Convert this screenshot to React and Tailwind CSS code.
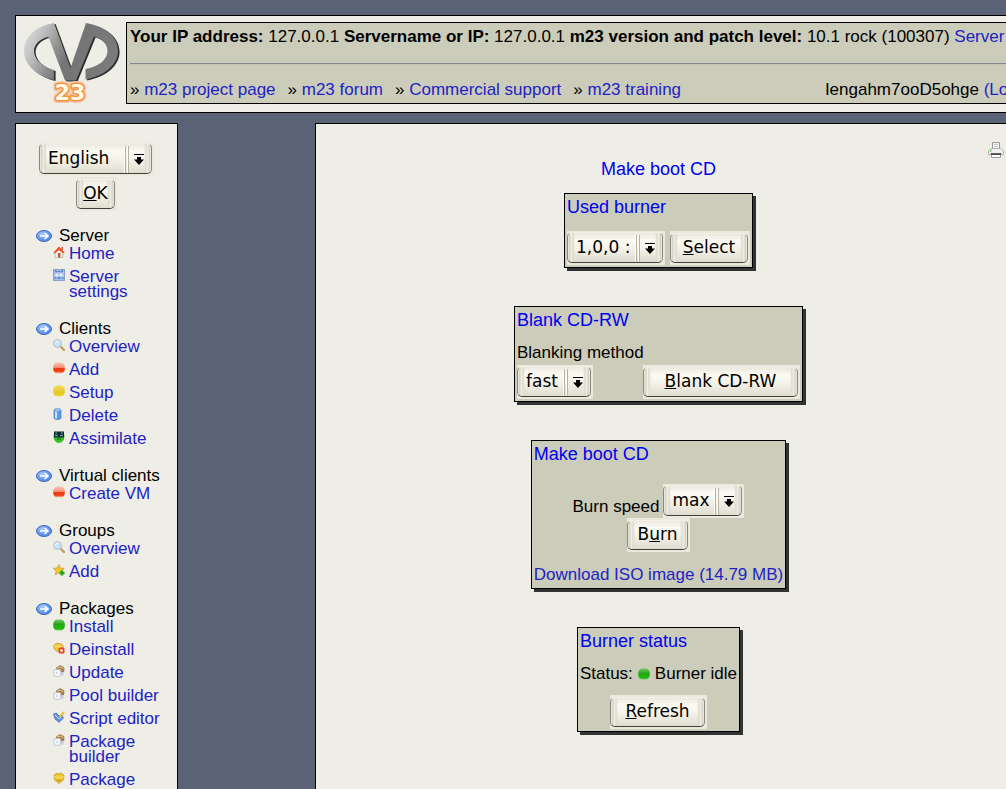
import React from "react";

const linkClass = "text-[#2222c4]";

function Logo() {
  const shape =
    "M30 1C11 4 0 16 0 29.5C0 43 13 54 30 58V48C19 45 10 38 10 29C10 22 17 16 24.5 15L41 58.5H52L70 14.5C78 17 83.5 22 83.5 29C83.5 38 74 45 61.5 47V57.5C80 54 94 43 94 29C94 14 80 4 62 1L46.5 46Z";
  return (
    <svg width="96" height="82" viewBox="0 0 96 82" role="img" aria-label="m23 logo" className="block shrink-0">
      <defs>
        <linearGradient id="metal" x1="0" y1="0.1" x2="1" y2="0.4">
          <stop offset="0" stopColor="#e0e0e0" />
          <stop offset="0.2" stopColor="#c0c0c0" />
          <stop offset="0.42" stopColor="#8e8e8e" />
          <stop offset="0.55" stopColor="#747474" />
          <stop offset="1" stopColor="#7a7a7a" />
        </linearGradient>
      </defs>
      <path d={shape} fill="#2c2c2c" transform="translate(1.6 1)" />
      <path d={shape} fill="url(#metal)" />
      <g fontFamily="DejaVu Sans" fontWeight="bold" fontSize="22" textAnchor="middle" strokeLinejoin="round">
        <text x="46" y="78" fill="none" stroke="#f8c4ae" strokeWidth="6">23</text>
        <text x="46" y="78" fill="none" stroke="#f0953c" strokeWidth="3">23</text>
        <text x="46" y="78" fill="#fffbe6">23</text>
      </g>
    </svg>
  );
}

function SectionIcon() {
  return (
    <svg width="16" height="12" viewBox="0 0 16 12" aria-hidden="true" className="block shrink-0">
      <defs>
        <radialGradient id="blueOval" cx="0.4" cy="0.35">
          <stop offset="0" stopColor="#a8ccff" />
          <stop offset="1" stopColor="#5a92ee" />
        </radialGradient>
      </defs>
      <ellipse cx="8" cy="6" rx="7.5" ry="5.5" fill="url(#blueOval)" stroke="#4468b8" />
      <path d="M4 6H11.5M8.5 3L12 6L8.5 9" stroke="#fff" strokeWidth="1.6" fill="none" />
    </svg>
  );
}

function Ball({ id, top, mid, bottom }) {
  return (
    <>
      <defs>
        <linearGradient id={id} x1="0" y1="0" x2="0" y2="1">
          <stop offset="0" stopColor={top} />
          <stop offset="0.45" stopColor={mid} />
          <stop offset="0.5" stopColor={bottom} />
          <stop offset="0.8" stopColor={bottom} />
          <stop offset="1" stopColor={top} />
        </linearGradient>
      </defs>
      <rect x="0.2" y="0.5" width="11.6" height="11" rx="4.5" fill={`url(#${id})`} />
    </>
  );
}

const glyphs = {
  home: (
    <>
      <path d="M2 6V11.5H10V6L6 2Z" fill="#eee9e2" stroke="#aaa398" strokeWidth="0.6" />
      <path d="M0.3 6.8L6 0.6L11.7 6.8L10 7.2L6 4L2 7.2Z" fill="#ee4f1e" />
      <rect x="8.5" y="1" width="1.5" height="3" fill="#b55b33" />
      <rect x="5" y="7" width="2.4" height="4.5" fill="#a5643b" />
    </>
  ),
  settings: (
    <>
      <rect x="0.5" y="0.5" width="11" height="11" fill="#a5c0ec" stroke="#8c9fc4" />
      <path d="M1.5 6L4 4L6 6L8 4L10.5 6L8 8L6 6L4 8Z" fill="#dfeaff" />
      <path d="M2 1.5L4 3M10 1.5L8 3M5 2.5H7M1.5 9.5L3.5 8.5M5 9.5L6 8.5L7 9.5M10.5 9.5L8.5 8.5" stroke="#4a73bd" strokeWidth="1.2" fill="none" />
    </>
  ),
  search: (
    <>
      <path d="M7.5 7.5L11 11" stroke="#c09a5c" strokeWidth="2.2" strokeLinecap="round" />
      <circle cx="4.5" cy="4.5" r="3.9" fill="#c9e6f4" stroke="#b0bfc8" />
      <path d="M2.5 4A2.5 2.5 0 0 1 5 2" stroke="#fff" fill="none" />
    </>
  ),
  red: <Ball id="ballRed" top="#f9c4b6" mid="#f6907a" bottom="#f03c12" />,
  green: <Ball id="ballGreen" top="#6ccc5e" mid="#2ca020" bottom="#1eb20c" />,
  yellow: <Ball id="ballYellow" top="#f0dc58" mid="#e8cf3e" bottom="#e6ca28" />,
  bin: (
    <>
      <path d="M1 2V10C1 12 8 12 8 10V2Z" fill="#5b9be8" stroke="#3b6fb5" strokeWidth="0.6" />
      <path d="M2 3V10.5H4V3Z" fill="#cde4ff" />
      <ellipse cx="4.5" cy="2" rx="3.5" ry="1.4" fill="#9ec8f5" stroke="#5a84bb" strokeWidth="0.6" />
    </>
  ),
  assimilate: (
    <>
      <path d="M0.3 4H11.7L10.8 9L8 11.8H4L1.2 9Z" fill="#36c224" />
      <rect x="1" y="0.5" width="10" height="6" fill="#17262b" />
      <path d="M2 4.5H5M7 4.5H10M2.5 2H4M8 2H9.5" stroke="#4f9fb0" strokeWidth="1.3" />
      <path d="M4 8H8" stroke="#1b6f14" />
    </>
  ),
  star: (
    <>
      <path d="M5.8 0.5L7.3 4L11.3 4.4L8.3 7L9.2 11L5.8 8.8L2.3 11L3.2 7L0.3 4.4L4.2 4Z" fill="#f2c62e" stroke="#c0922a" strokeWidth="0.6" />
      <path d="M9 6.5V11.5M6.5 9H11.5" stroke="#22a51a" strokeWidth="2.4" />
    </>
  ),
  pack: (
    <>
      <path d="M1 3L4 1L6 2L8 1L11 3L10.5 8L6 11.5L1.5 8Z" fill="#efc52f" stroke="#b88d28" strokeWidth="0.6" />
      <path d="M1.5 4.5L6 6L10.5 4.5" stroke="#fae788" fill="none" />
      <path d="M4 8L6 9L8 8" stroke="#a77f20" fill="none" />
    </>
  ),
  packRemove: (
    <>
      <path d="M0.5 4L3 1L6 1.5L9 2L10.5 5L8 9L4 9.5L1 7Z" fill="#f0c63a" stroke="#c09530" strokeWidth="0.6" />
      <path d="M2 4L6 5L9 4" stroke="#fbeba0" fill="none" />
      <rect x="5.5" y="5.5" width="6" height="6" rx="1.5" fill="#ea4025" />
      <rect x="7.3" y="7.3" width="2.4" height="2.4" fill="#fff" />
    </>
  ),
  update: (
    <>
      <path d="M3 3L7 0.5L11 2.5V6.5L7 7Z" fill="#b08250" stroke="#7d5c38" strokeWidth="0.5" />
      <path d="M4 3L7 2L10.5 3.5" stroke="#e5c48f" fill="none" />
      <rect x="1" y="4.5" width="6.5" height="6.8" rx="1" fill="#f6f7fa" stroke="#b5bac5" strokeWidth="0.7" />
      <path d="M7.5 7H10.5V10.5H7.5Z" fill="#c6cbd6" />
      <circle cx="4" cy="8" r="1.3" fill="#d5dbe6" />
    </>
  ),
  script: (
    <>
      <path d="M0.5 3L3.5 2L6 5L9 4L10.5 7L6 11.5L2 8Z" fill="#5f8fdc" stroke="#4067ad" strokeWidth="0.6" />
      <path d="M2 4L6 8L8.5 6" stroke="#cfe1fb" fill="none" />
      <path d="M6.5 6L11 1" stroke="#f0bd2b" strokeWidth="1.9" />
    </>
  ),
};

function ItemIcon({ name }) {
  return (
    <svg width="12" height="12" viewBox="0 0 12 12" aria-hidden="true" className="block shrink-0">
      {glyphs[name]}
    </svg>
  );
}

function PrinterIcon() {
  return (
    <svg width="16" height="16" viewBox="0 0 16 16" aria-hidden="true" className="block">
      <path d="M4.5 7V0.5H11.5V7" fill="#f4f4f2" stroke="#999" />
      <path d="M6 2.5H10M6 4.5H10" stroke="#c8c8c8" />
      <path d="M0.5 9L3 6.5H13L15.5 9V12.5H0.5Z" fill="#f1f1ef" stroke="#b0b0ae" />
      <path d="M3 12H13" stroke="#222" strokeWidth="1.4" />
      <path d="M3.5 13V15.5H12.5V13" fill="#fff" stroke="#999" />
      <rect x="2" y="8" width="1.5" height="1.5" fill="#4fc04a" />
    </svg>
  );
}

const bevel =
  "rounded-[5px] border border-t-[#f2efe6] border-x-[#8a887f] border-b-[#3f3e3a] bg-[linear-gradient(90deg,#f0ede3_0px,#cfccc0_2px,#f4f2e9_3px,#dddace_5px,transparent_7px,transparent_calc(100%_-_7px),#dddace_calc(100%_-_5px),#f4f2e9_calc(100%_-_3px),#cfccc0_calc(100%_-_2px),#f0ede3_100%),linear-gradient(180deg,#ece9df_0%,#fbfaf3_25%,#f6f4ea_50%,#dfdccf_100%)] font-['DejaVu_Sans',sans-serif] text-[17px] text-black";

function BevelButton({ className, accessKey, children }) {
  return (
    <span className="inline-flex bg-[#ebe8dd] pt-0.5 pr-0.5 pb-0.5">
      <button type="button" accessKey={accessKey} className={`h-[30px] pb-0.5 leading-5 ${bevel} ${className}`}>
        {children}
      </button>
    </span>
  );
}

function BevelSelect({ label, options, className }) {
  return (
    <span className="relative inline-flex bg-[#ebe8dd] pt-px pr-0.5 pb-0.5">
      <select aria-label={label} className={`h-[31px] appearance-none pb-0.5 pl-2 leading-5 ${bevel} ${className}`}>
        {options.map((o) => (
          <option key={o}>{o}</option>
        ))}
      </select>
      <svg width="28" height="27" viewBox="0 0 28 27" aria-hidden="true" className="pointer-events-none absolute top-1 right-0.5">
        <path d="M0.5 0V27M3.5 0V27" stroke="#fdfcf6" />
        <path d="M1.5 0V27M4.5 0V27" stroke="#b5b2a6" />
        <path d="M10 8H20V9H10ZM13 11H17V13.5H20L15 19L10 13.5H13Z" fill="#000" />
      </svg>
    </span>
  );
}

const menu = [
  { title: "Server", items: [["home", "Home"], ["settings", "Server settings"]] },
  {
    title: "Clients",
    items: [["search", "Overview"], ["red", "Add"], ["yellow", "Setup"], ["bin", "Delete"], ["assimilate", "Assimilate"]],
  },
  { title: "Virtual clients", items: [["red", "Create VM"]] },
  { title: "Groups", items: [["search", "Overview"], ["star", "Add"]] },
  {
    title: "Packages",
    items: [
      ["green", "Install"],
      ["packRemove", "Deinstall"],
      ["update", "Update"],
      ["update", "Pool builder"],
      ["script", "Script editor"],
      ["update", "Package builder"],
      ["pack", "Package"],
    ],
  },
];

function Sidebar() {
  return (
    <aside className="w-[163px] shrink-0 border border-b-0 border-black bg-[#eeeee6] pt-[18px]">
      <form className="flex flex-col items-center gap-px" onSubmit={(e) => e.preventDefault()}>
        <BevelSelect label="Language" options={["English"]} className="w-[113px]" />
        <BevelButton accessKey="o" className="w-[39px]">
          <u>O</u>K
        </BevelButton>
      </form>
      <nav className="mt-3.5 flex flex-col gap-[11px] pl-5">
        {menu.map((section) => (
          <section key={section.title}>
            <h2 className="flex items-center gap-[7px] leading-[21px]">
              <SectionIcon />
              {section.title}
            </h2>
            <ul className="pl-[17px]">
              {section.items.map(([icon, text]) => (
                <li key={text} className="mb-2 flex gap-1 pr-3 leading-[15px]">
                  <ItemIcon name={icon} />
                  <a href="#" className={linkClass}>{text}</a>
                </li>
              ))}
            </ul>
          </section>
        ))}
      </nav>
    </aside>
  );
}

function Header() {
  return (
    <header className="-mr-[54px] flex gap-1.5 border border-black bg-[#eeeee6] pt-1.5 pb-2 pl-2">
      <Logo />
      <div className="min-w-0 grow border border-black bg-[#ccccba] px-[3px] pt-1 pb-0.5 leading-5 whitespace-nowrap">
        <p>
          <b>Your IP address:</b> 127.0.0.1 <b>Servername or IP:</b> 127.0.0.1{" "}
          <b>m23 version and patch level:</b> 10.1 rock (100307){" "}
          <a href="#" className={linkClass}>Server status</a>
        </p>
        <hr className="mt-4 mb-[15px] border-t border-b border-t-[#85858c] border-b-[#c4c4bc]" />
        <div className="flex justify-between pb-px">
          <ul className="flex gap-3">
            {["m23 project page", "m23 forum", "Commercial support", "m23 training"].map((t) => (
              <li key={t}>
                » <a href="#" className={linkClass}>{t}</a>
              </li>
            ))}
          </ul>
          <p className="pr-2">
            Iengahm7ooD5ohge <a href="#" className={linkClass}>(Logout)</a>
          </p>
        </div>
      </div>
    </header>
  );
}

function Card({ title, children }) {
  return (
    <section className="flex flex-col border border-black bg-[#ccccba] p-0.5 leading-[22px] shadow-[3px_3px_0_#333]">
      <h2 className="text-lg leading-[22px] text-[#0000ee]">{title}</h2>
      {children}
    </section>
  );
}

export default function App() {
  return (
    <div className="flex h-screen flex-col gap-2.5 overflow-hidden bg-[#5a6375] pt-[15px] pl-[15px] font-['Liberation_Sans',Arial,sans-serif] text-[17px] text-black">
      <Header />
      <div className="flex min-h-0 grow">
        <Sidebar />
        <main className="ml-[137px] grow border-t border-l border-black bg-[#eeeee6]">
          <div className="flex justify-end pt-[18px] pr-0.5">
            <a href="#" aria-label="Print">
              <PrinterIcon />
            </a>
          </div>
          <div className="flex flex-col items-center pr-[5px]">
            <h1 className="mb-[13px] text-lg leading-[22px] text-[#0000ee]">Make boot CD</h1>
            <div className="flex flex-col items-center gap-[38px]">
              <Card title="Used burner">
                <div className="mt-[13px] flex gap-[5px]">
                  <BevelSelect label="Used burner" options={["1,0,0 :"]} className="w-[96px]" />
                  <BevelButton accessKey="s" className="w-[78px]">
                    <u>S</u>elect
                  </BevelButton>
                </div>
              </Card>

              <Card title="Blank CD-RW">
                <p className="mt-[11px]">Blanking method</p>
                <div className="mt-px flex justify-between gap-[50px]">
                  <BevelSelect label="Blanking method" options={["fast"]} className="w-[74px]" />
                  <BevelButton accessKey="b" className="w-[155px]">
                    <u>B</u>lank CD-RW
                  </BevelButton>
                </div>
              </Card>

              <Card title="Make boot CD">
                <div className="mt-[19px] flex items-end justify-center gap-1">
                  <span>Burn speed</span>
                  <BevelSelect label="Burn speed" options={["max"]} className="w-[79px]" />
                </div>
                <div className="flex justify-center">
                  <BevelButton accessKey="u" className="w-[61px]">
                    B<u>u</u>rn
                  </BevelButton>
                </div>
                <a href="#" className={`mt-3 ${linkClass}`}>Download ISO image (14.79 MB)</a>
              </Card>

              <Card title="Burner status">
                <p className="mt-[11px] flex items-center gap-[5px]">
                  Status: <ItemIcon name="green" /> Burner idle
                </p>
                <div className="mt-2.5 flex justify-center">
                  <BevelButton accessKey="r" className="w-[95px]">
                    <u>R</u>efresh
                  </BevelButton>
                </div>
              </Card>
            </div>
          </div>
        </main>
      </div>
    </div>
  );
}
